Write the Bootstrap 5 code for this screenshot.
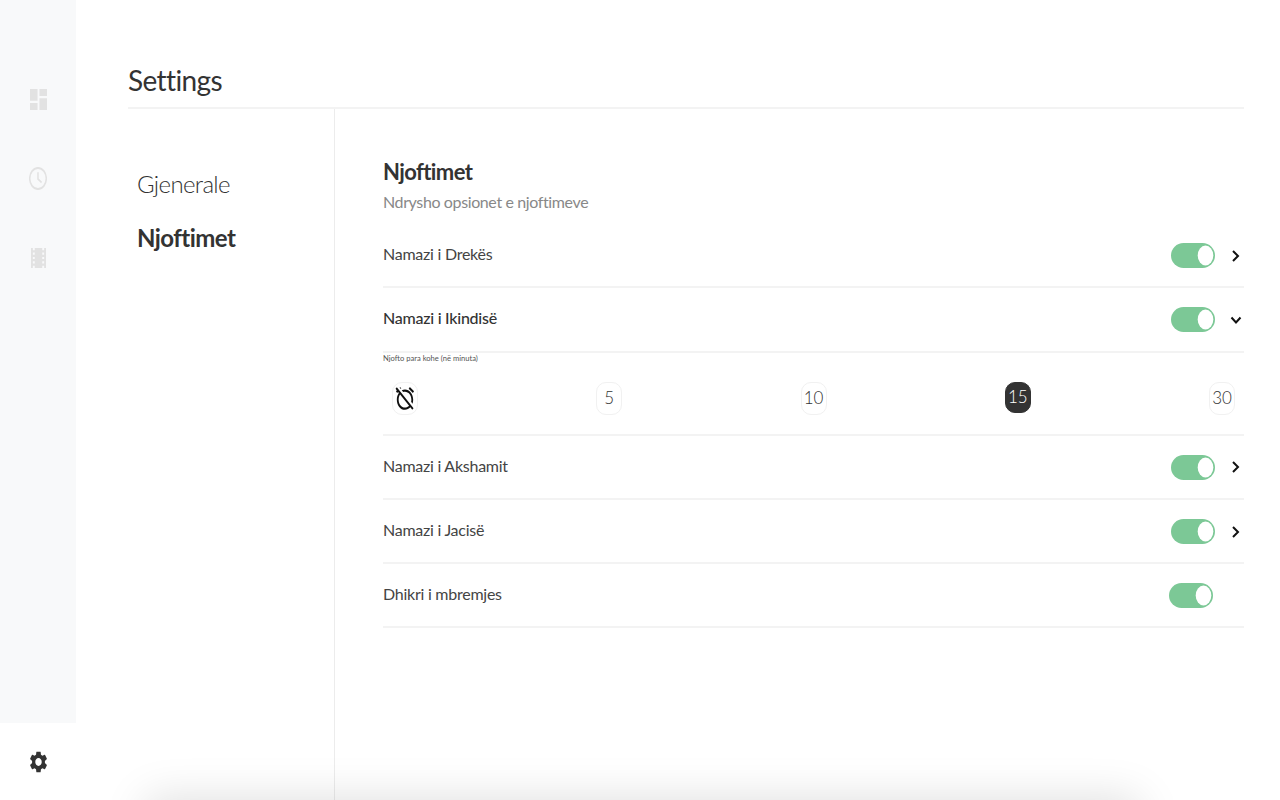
<!DOCTYPE html>
<html lang="en">
<head>
  <meta charset="UTF-8">
  <meta name="viewport" content="width=device-width, initial-scale=1.0">
  <title>Settings</title>
  <link href="https://cdn.jsdelivr.net/npm/bootstrap@5.3.0/dist/css/bootstrap.min.css" rel="stylesheet">
  <style>
    html, body {
      height: 100%;
      overflow: hidden;
    }

    body {
      font-family: Lato, "Liberation Sans", sans-serif;
      color: #333;
      background-color: #fff;
    }

    .app-shell {
      height: 800px;
      position: relative;
      overflow: hidden;
    }

    /* Sidebar */
    .side-rail {
      width: 76px;
      flex-shrink: 0;
    }

    .side-icons {
      height: 723px;
      background-color: #f8f9fa;
      padding-top: 89px;
    }

    .side-icons svg {
      fill: #e2e2e2;
      display: block;
    }

    .side-clock {
      margin-top: 57px;
    }

    .side-film {
      margin-top: 58px;
    }

    .side-gear {
      height: 77px;
    }

    /* Main */
    .main-pane {
      padding: 0 36px 0 52px;
    }

    .page-head {
      height: 109px;
      padding-top: 61px;
      border-bottom: 2px solid #f3f3f3;
    }

    .page-head h1 {
      font-size: 28px;
      line-height: 38px;
      font-weight: 400;
      letter-spacing: -.6px;
      margin: 0;
    }

    .tab-col {
      width: 207px;
      flex-shrink: 0;
      border-right: 1px solid #ececec;
      padding: 55px 0 0 9px;
    }

    .tab-link {
      font-size: 24px;
      line-height: 40px;
      margin-bottom: 14px;
      font-weight: 300;
      letter-spacing: -.65px;
      color: #333;
    }

    .tab-link.is-on {
      font-weight: 700;
      letter-spacing: -.55px;
    }

    .content-col {
      padding: 47px 0 0 48px;
      min-width: 0;
    }

    .content-col h2 {
      font-size: 22px;
      line-height: 32px;
      font-weight: 700;
      letter-spacing: -.6px;
      margin: 0;
    }

    .sub-title {
      font-size: 16px;
      line-height: 26px;
      letter-spacing: -.38px;
      color: #888;
      margin-top: 1px;
      margin-bottom: 9px;
    }

    .notif-row {
      height: 64.3px;
      padding-bottom: 2px;
      border-bottom: 2px solid #f3f3f3;
      font-size: 16px;
      letter-spacing: -.25px;
      color: #444;
    }

    .notif-row.is-open {
      font-weight: 500;
      color: #333;
    }

    .toggle-wrap {
      width: 73px;
      flex-shrink: 0;
    }

    .form-switch.toggle-wrap,
    .form-switch.no-chevron {
      padding-left: 0;
      margin: 0;
      min-height: 0;
    }

    .form-switch.no-chevron {
      margin-right: 31px;
    }

    .form-switch .toggle-input,
    .form-switch .toggle-input:checked,
    .form-switch .toggle-input:focus {
      --bs-form-switch-bg: url("data:image/svg+xml,%3csvg xmlns='http://www.w3.org/2000/svg' viewBox='0 0 44 25'%3e%3cellipse cx='34.5' cy='12.5' rx='7.8' ry='10' fill='%23fff'/%3e%3c/svg%3e");
      width: 44px;
      height: 25px;
      margin: 3px 0 0;
      float: none;
      display: block;
      background-color: #7cc896;
      background-size: 100% 100%;
      background-position: center;
      border: 0;
      box-shadow: none;
    }

    .chev {
      stroke: #111;
      stroke-width: 2;
      fill: none;
    }

    .chev-right {
      width: 9px;
      height: 14px;
      margin: 3px 4px 0 0;
    }

    .chev-down {
      width: 12px;
      height: 9px;
      margin: 4px 2px 0 0;
    }

    .time-panel {
      height: 83px;
      border-bottom: 2px solid #f3f3f3;
    }

    .time-caption {
      font-size: 7.6px;
      line-height: 11px;
      color: #555;
    }

    .time-options {
      padding: 18px 9px 0;
    }

    .time-chip {
      width: 26px;
      height: 33px;
      border: 1px solid #f1f1f1;
      border-radius: 10px;
      font-size: 17px;
      font-weight: 300;
      color: #333;
    }

    .time-chip.is-on {
      background-color: #333;
      border-color: #333;
      color: #fff;
      height: 31px;
    }

    .time-chip svg {
      width: 20px;
      height: 25px;
      fill: #111;
    }

    /* shadow of something just under the fold */
    .fold-shadow {
      position: absolute;
      left: 160px;
      width: 965px;
      top: 812px;
      height: 20px;
      box-shadow: 0 0 44px 14px rgba(0, 0, 0, .13);
    }
  </style>
</head>
<body>

  <div class="app-shell d-flex">

    <!-- Sidebar -->
    <div class="side-rail d-flex flex-column">
      <div class="side-icons d-flex flex-column align-items-center">
        <svg width="17" height="21" viewBox="3 3 18 18" preserveAspectRatio="none"><path d="M3 13h8V3H3v10zm0 8h8v-6H3v6zm10 0h8V11h-8v10zm0-18v6h8V3h-8z"/></svg>
        <svg class="side-clock" width="18" height="23" viewBox="2 2 20 20" preserveAspectRatio="none"><circle cx="12" cy="12" r="9.2" fill="none" stroke="#e2e2e2" stroke-width="1.7"/><path d="M12 6.5v6l4 3" fill="none" stroke="#e2e2e2" stroke-width="1.7"/></svg>
        <svg class="side-film" width="15" height="20" viewBox="4 3 16 18" preserveAspectRatio="none"><path d="M18 3v2h-2V3H8v2H6V3H4v18h2v-2h2v2h8v-2h2v2h2V3h-2zM8 17H6v-2h2v2zm0-4H6v-2h2v2zm0-4H6V7h2v2zm10 8h-2v-2h2v2zm0-4h-2v-2h2v2zm0-4h-2V7h2v2z"/></svg>
      </div>
      <div class="side-gear d-flex align-items-center justify-content-center">
        <svg width="17" height="22" viewBox="2.5 1.8 19 20.4" preserveAspectRatio="none" fill="#333"><path d="M19.14 12.94c.04-.3.06-.61.06-.94 0-.32-.02-.64-.07-.94l2.03-1.58c.18-.14.23-.41.12-.61l-1.92-3.32c-.12-.22-.37-.29-.59-.22l-2.39.96c-.5-.38-1.03-.7-1.62-.94l-.36-2.54c-.04-.24-.24-.41-.48-.41h-3.84c-.24 0-.43.17-.47.41l-.36 2.54c-.59.24-1.13.57-1.62.94l-2.39-.96c-.22-.08-.47 0-.59.22L2.74 8.87c-.12.21-.08.47.12.61l2.03 1.58c-.05.3-.09.63-.09.94s.02.64.07.94l-2.03 1.58c-.18.14-.23.41-.12.61l1.92 3.32c.12.22.37.29.59.22l2.39-.96c.5.38 1.03.7 1.62.94l.36 2.54c.05.24.24.41.48.41h3.84c.24 0 .44-.17.47-.41l.36-2.54c.59-.24 1.13-.56 1.62-.94l2.39.96c.22.08.47 0 .59-.22l1.92-3.32c.12-.22.07-.47-.12-.61l-2.01-1.58zM12 15.6c-1.98 0-3.6-1.62-3.6-3.6s1.62-3.6 3.6-3.6 3.6 1.62 3.6 3.6-1.62 3.6-3.6 3.6z"/></svg>
      </div>
    </div>

    <!-- Main -->
    <div class="main-pane flex-grow-1 d-flex flex-column">
      <div class="page-head">
        <h1>Settings</h1>
      </div>

      <div class="d-flex flex-grow-1">
        <div class="tab-col">
          <div class="tab-link">Gjenerale</div>
          <div class="tab-link is-on">Njoftimet</div>
        </div>

        <div class="content-col flex-grow-1">
          <h2>Njoftimet</h2>
          <div class="sub-title">Ndrysho opsionet e njoftimeve</div>

          <div class="notif-row d-flex align-items-center justify-content-between">
            <span>Namazi i Drekës</span>
            <div class="form-check form-switch toggle-wrap d-flex align-items-center justify-content-between">
              <input class="form-check-input toggle-input" type="checkbox" role="switch" checked>
              <svg class="chev chev-right" viewBox="0 0 9 14"><path d="M2 2l5 5-5 5"/></svg>
            </div>
          </div>

          <div class="notif-row is-open d-flex align-items-center justify-content-between">
            <span>Namazi i Ikindisë</span>
            <div class="form-check form-switch toggle-wrap d-flex align-items-center justify-content-between">
              <input class="form-check-input toggle-input" type="checkbox" role="switch" checked>
              <svg class="chev chev-down" viewBox="0 0 12 9"><path d="M1.5 1.5L6 6.5l4.5-5"/></svg>
            </div>
          </div>

          <div class="time-panel">
            <div class="time-caption">Njofto para kohe (në minuta)</div>
            <div class="time-options d-flex justify-content-between align-items-start">
              <div class="time-chip d-flex align-items-center justify-content-center">
                <svg viewBox="1 1 22 22" preserveAspectRatio="none" class="flex-shrink-0"><path d="M10.04 6.29C10.66 6.11 11.32 6 12 6c3.86 0 7 3.14 7 7 0 .68-.11 1.34-.29 1.96l1.56 1.56c.47-1.08.73-2.27.73-3.52 0-4.97-4.03-9-9-9-1.25 0-2.44.26-3.53.72l1.57 1.57zm7.297-4.48l4.607 3.845-1.28 1.535-4.61-3.843zM3.02 2.1L1.61 3.51l1.37 1.37-.92.77 1.28 1.54 1.06-.88.8.8C3.83 8.69 3 10.75 3 13c0 4.97 4.03 9 9 9 2.25 0 4.31-.83 5.89-2.2l2.1 2.1 1.41-1.41L3.02 2.1zM12 20c-3.86 0-7-3.14-7-7 0-1.7.61-3.26 1.62-4.47l9.85 9.85C15.26 19.39 13.7 20 12 20zM7.48 3.73l.46-.38-1.28-1.54-.6.5z"/></svg>
              </div>
              <div class="time-chip d-flex align-items-center justify-content-center">5</div>
              <div class="time-chip d-flex align-items-center justify-content-center">10</div>
              <div class="time-chip is-on d-flex align-items-center justify-content-center">15</div>
              <div class="time-chip d-flex align-items-center justify-content-center">30</div>
            </div>
          </div>

          <div class="notif-row d-flex align-items-center justify-content-between">
            <span>Namazi i Akshamit</span>
            <div class="form-check form-switch toggle-wrap d-flex align-items-center justify-content-between">
              <input class="form-check-input toggle-input" type="checkbox" role="switch" checked>
              <svg class="chev chev-right" viewBox="0 0 9 14"><path d="M2 2l5 5-5 5"/></svg>
            </div>
          </div>

          <div class="notif-row d-flex align-items-center justify-content-between">
            <span>Namazi i Jacisë</span>
            <div class="form-check form-switch toggle-wrap d-flex align-items-center justify-content-between">
              <input class="form-check-input toggle-input" type="checkbox" role="switch" checked>
              <svg class="chev chev-right" viewBox="0 0 9 14"><path d="M2 2l5 5-5 5"/></svg>
            </div>
          </div>

          <div class="notif-row d-flex align-items-center justify-content-between">
            <span>Dhikri i mbremjes</span>
            <div class="form-check form-switch no-chevron">
              <input class="form-check-input toggle-input" type="checkbox" role="switch" checked>
            </div>
          </div>
        </div>
      </div>
    </div>

    <div class="fold-shadow"></div>
  </div>

  <script src="https://cdn.jsdelivr.net/npm/bootstrap@5.3.0/dist/js/bootstrap.bundle.min.js"></script>
</body>
</html>
